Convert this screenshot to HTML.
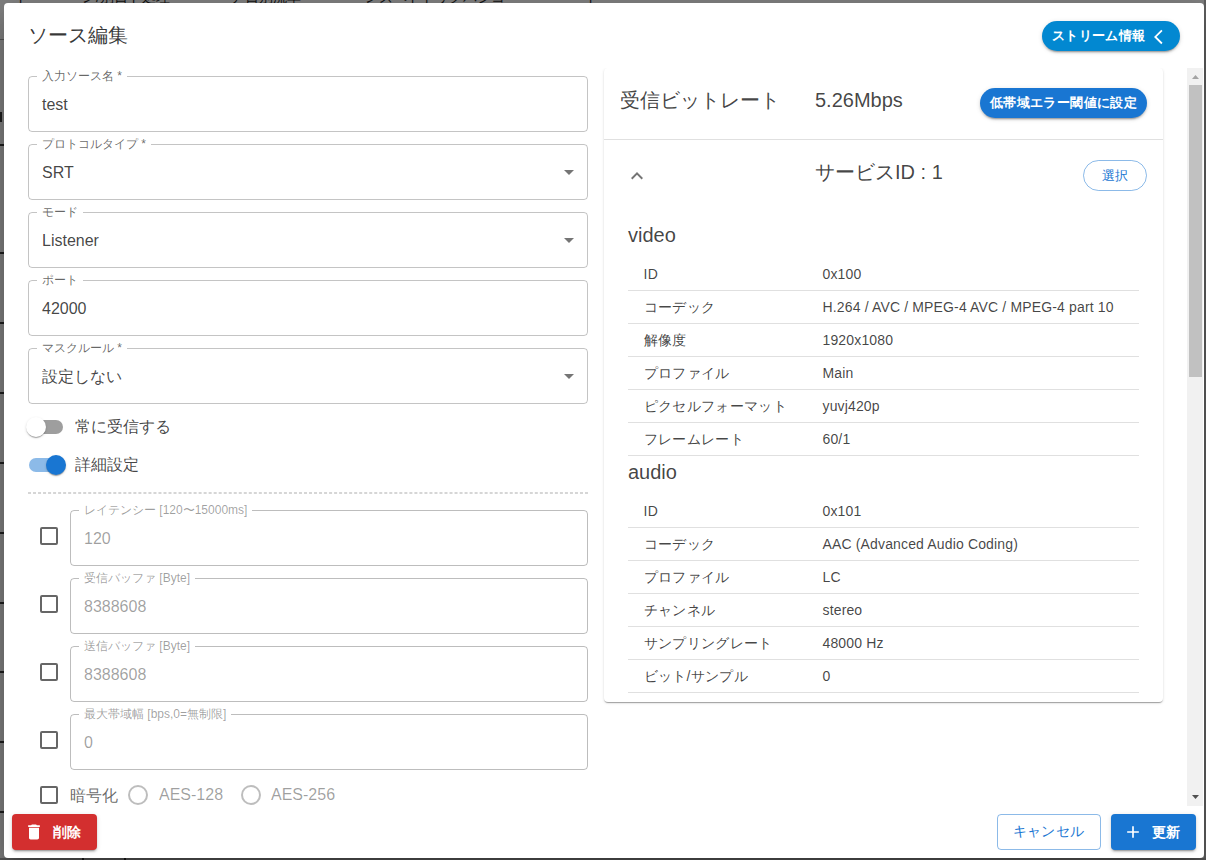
<!DOCTYPE html>
<html><head><meta charset="utf-8">
<style>
*{box-sizing:border-box;margin:0;padding:0}
html,body{width:1206px;height:860px;overflow:hidden}
body{background:#808080;font-family:"Liberation Sans",sans-serif;color:rgba(0,0,0,0.74);position:relative}
.abs{position:absolute}
.dlg{position:absolute;left:4px;top:3px;width:1200px;height:855px;background:#fff;border-radius:4px;overflow:hidden;box-shadow:0 11px 15px -7px rgba(0,0,0,0.2),0 24px 38px 3px rgba(0,0,0,0.14),0 9px 46px 8px rgba(0,0,0,0.12)}
.title{position:absolute;left:24px;top:16px;font-size:20px;line-height:32px;color:rgba(0,0,0,0.78);white-space:nowrap}
.pill{position:absolute;border-radius:16px;color:#fff;font-size:13px;font-weight:bold;white-space:nowrap;letter-spacing:0.02857em;box-shadow:0 3px 1px -2px rgba(0,0,0,0.2),0 2px 2px 0 rgba(0,0,0,0.14),0 1px 5px 0 rgba(0,0,0,0.12)}
.content{position:absolute;left:0;top:65px;width:1200px;height:738px;overflow:hidden}
.fld{position:absolute;left:24px;width:560px;height:56px}
.fld .ol{position:absolute;left:0;top:0;right:0;bottom:0;border:1px solid rgba(0,0,0,0.23);border-radius:4px}
.fld .lb{position:absolute;left:9px;top:-8px;padding:0 5px;background:#fff;font-size:12px;line-height:16px;color:rgba(0,0,0,0.6);white-space:nowrap}
.fld .val{position:absolute;left:14px;top:16.5px;font-size:16px;line-height:23px;white-space:nowrap}
.fld.dis .val{color:rgba(0,0,0,0.38)}
.fld.dis .lb{color:rgba(0,0,0,0.38)}
.fld.dis .ol{border-color:rgba(0,0,0,0.26)}
.arrow{position:absolute;right:7px;top:16px;width:24px;height:24px}
.sw{position:absolute;left:13px;width:58px;height:38px}
.sw .tr{position:absolute;left:12px;top:12px;width:34px;height:14px;border-radius:7px}
.sw .th{position:absolute;top:9px;width:20px;height:20px;border-radius:50%;box-shadow:0 2px 1px -1px rgba(0,0,0,0.2),0 1px 1px 0 rgba(0,0,0,0.14),0 1px 3px 0 rgba(0,0,0,0.12)}
.swl{position:absolute;left:71px;font-size:16px;line-height:24px;white-space:nowrap}
.cb{position:absolute;left:36px;width:18px;height:18px;border:2px solid rgba(0,0,0,0.6);border-radius:2px}
.card{position:absolute;left:600px;top:0;width:559px;height:634px;background:#fff;border-radius:4px;box-shadow:0 2px 1px -1px rgba(0,0,0,0.2),0 1px 1px 0 rgba(0,0,0,0.14),0 1px 3px 0 rgba(0,0,0,0.12)}
.tb{position:absolute;left:24px;width:511px}
.row{position:relative;height:33px;border-bottom:1px solid rgba(224,224,224,1);font-size:14px;line-height:20px}
.row .k{position:absolute;left:15.5px;top:6px;white-space:nowrap;letter-spacing:0.35px}
.row .v{position:absolute;left:194.5px;top:6px;white-space:nowrap;letter-spacing:0.15px}
.h6{position:absolute;left:24px;font-size:20px;line-height:32px;white-space:nowrap}
.sb{position:absolute;left:1183px;top:0;width:16px;height:738px;background:#f1f1f1}
.btn{position:absolute;top:811px;height:36px;border-radius:4px;font-size:14px;white-space:nowrap;letter-spacing:0.02857em}
</style></head><body>
<div class="abs" style="left:1204px;top:0;width:2px;height:860px;background:#616161"></div>
<div class="abs" style="left:0;top:858px;width:1206px;height:2px;background:#5a5a5a"></div>
<div class="abs" style="left:82px;top:857px;width:2px;height:3px;background:#1a1a1a"></div>
<div class="abs" style="left:124px;top:857px;width:2px;height:3px;background:#1a1a1a"></div>
<div class="abs" style="left:0;top:144px;width:4px;height:2px;background:#1e1e1e"></div>
<div class="abs" style="left:0;top:252px;width:4px;height:2px;background:#1e1e1e"></div>
<div class="abs" style="left:0;top:322px;width:4px;height:2px;background:#1e1e1e"></div>
<div class="abs" style="left:0;top:392px;width:4px;height:2px;background:#1e1e1e"></div>
<div class="abs" style="left:0;top:462px;width:4px;height:2px;background:#1e1e1e"></div>
<div class="abs" style="left:0;top:532px;width:4px;height:2px;background:#1e1e1e"></div>
<div class="abs" style="left:0;top:602px;width:4px;height:2px;background:#1e1e1e"></div>
<div class="abs" style="left:0;top:671px;width:4px;height:2px;background:#1e1e1e"></div>
<div class="abs" style="left:0;top:741px;width:4px;height:2px;background:#1e1e1e"></div>
<div class="abs" style="left:0;top:811px;width:4px;height:2px;background:#1e1e1e"></div>
<div class="abs" style="left:0;top:112px;width:2px;height:10px;background:#1e1e1e"></div>
<div class="abs" style="left:0;top:39px;width:4px;height:1px;background:#555"></div>
<div class="abs" style="left:0;top:-11px;width:620px;height:14px;font-size:14px;line-height:16px;color:#111;white-space:nowrap">
<span class="abs" style="left:1px">ード</span><span class="abs" style="left:82px">ン/別日ド処理</span><span class="abs" style="left:231px">ア日別流率</span><span class="abs" style="left:365px">ンズベドトリクパジコー</span><span class="abs" style="left:585px">ド</span></div>
<div class="dlg">
  <div class="title">ソース編集</div>
  <div class="pill" style="left:1038px;top:18px;width:138px;height:30px;background:#0288d1;">
    <span class="abs" style="left:10px;top:6px;line-height:18px">ストリーム情報</span>
    <svg class="abs" style="left:110px;top:7px" width="14" height="18" viewBox="0 0 14 18"><path fill="none" stroke="#fff" stroke-width="1.8" d="M9.9 2.3 3.3 8.9 9.9 15.5"/></svg>
  </div>

  <div class="content">
    <!-- left column fields -->
    <div class="fld" style="top:8px"><div class="ol"></div><div class="lb">入力ソース名 *</div><div class="val">test</div></div>
    <div class="fld" style="top:76px"><div class="ol"></div><div class="lb">プロトコルタイプ *</div><div class="val">SRT</div>
      <svg class="arrow" viewBox="0 0 24 24"><path fill="rgba(0,0,0,0.54)" d="M7 10l5 5 5-5z"/></svg></div>
    <div class="fld" style="top:144px"><div class="ol"></div><div class="lb">モード</div><div class="val">Listener</div>
      <svg class="arrow" viewBox="0 0 24 24"><path fill="rgba(0,0,0,0.54)" d="M7 10l5 5 5-5z"/></svg></div>
    <div class="fld" style="top:212px"><div class="ol"></div><div class="lb">ポート</div><div class="val">42000</div></div>
    <div class="fld" style="top:280px"><div class="ol"></div><div class="lb">マスクルール *</div><div class="val">設定しない</div>
      <svg class="arrow" viewBox="0 0 24 24"><path fill="rgba(0,0,0,0.54)" d="M7 10l5 5 5-5z"/></svg></div>

    <div class="sw" style="top:340px"><div class="tr" style="background:#000;opacity:0.38"></div><div class="th" style="left:9px;background:#fff"></div></div>
    <div class="swl" style="top:347px">常に受信する</div>
    <div class="sw" style="top:378px"><div class="tr" style="background:#1976d2;opacity:0.5"></div><div class="th" style="left:29px;background:#1976d2"></div></div>
    <div class="swl" style="top:385px">詳細設定</div>

    <svg class="abs" style="left:24px;top:424px" width="560" height="2"><line x1="0" y1="1" x2="560" y2="1" stroke="#d6d6d6" stroke-width="2" stroke-dasharray="3 2.018"/></svg>

    <div class="cb" style="top:459px"></div>
    <div class="fld dis" style="left:66px;width:518px;top:442px"><div class="ol"></div><div class="lb">レイテンシー [120〜15000ms]</div><div class="val">120</div></div>
    <div class="cb" style="top:527px"></div>
    <div class="fld dis" style="left:66px;width:518px;top:510px"><div class="ol"></div><div class="lb">受信バッファ [Byte]</div><div class="val">8388608</div></div>
    <div class="cb" style="top:595px"></div>
    <div class="fld dis" style="left:66px;width:518px;top:578px"><div class="ol"></div><div class="lb">送信バッファ [Byte]</div><div class="val">8388608</div></div>
    <div class="cb" style="top:663px"></div>
    <div class="fld dis" style="left:66px;width:518px;top:646px"><div class="ol"></div><div class="lb">最大帯域幅 [bps,0=無制限]</div><div class="val">0</div></div>

    <div class="cb" style="top:718px"></div>
    <div class="abs" style="left:66px;top:715.5px;font-size:16px;line-height:24px;color:rgba(0,0,0,0.6)">暗号化</div>
    <div class="abs" style="left:124px;top:717px;width:20px;height:20px;border:2px solid rgba(0,0,0,0.26);border-radius:50%"></div>
    <div class="abs" style="left:155px;top:715px;font-size:16px;line-height:24px;color:rgba(0,0,0,0.38)">AES-128</div>
    <div class="abs" style="left:237px;top:717px;width:20px;height:20px;border:2px solid rgba(0,0,0,0.26);border-radius:50%"></div>
    <div class="abs" style="left:267px;top:715px;font-size:16px;line-height:24px;color:rgba(0,0,0,0.38)">AES-256</div>

    <!-- right card -->
    <div class="card">
      <div class="abs" style="left:16px;top:18px;font-size:20px;line-height:28px">受信ビットレート</div>
      <div class="abs" style="left:211px;top:18px;font-size:20px;line-height:28px">5.26Mbps</div>
      <div class="pill" style="left:376px;top:20px;width:167px;height:30px;background:#1976d2;">
        <span class="abs" style="left:10px;top:6px;line-height:18px">低帯域エラー閾値に設定</span>
      </div>
      <div class="abs" style="left:0;top:71px;width:559px;height:1px;background:rgba(0,0,0,0.12)"></div>

      <svg class="abs" style="left:21px;top:96px" width="24" height="24" viewBox="0 0 24 24"><path fill="rgba(0,0,0,0.54)" d="M12 8l-6 6 1.41 1.41L12 10.83l4.59 4.58L18 14z"/></svg>
      <div class="abs" style="left:211px;top:90px;font-size:20px;line-height:28px">サービスID : 1</div>
      <div class="abs" style="left:479px;top:92px;width:64px;height:31px;border:1px solid rgba(25,118,210,0.5);border-radius:16px;color:#1976d2;font-size:13px;line-height:18px">
        <span class="abs" style="left:18px;top:6px;letter-spacing:0.02857em">選択</span>
      </div>

      <div class="h6" style="top:151px">video</div>
      <div class="tb" style="top:190px">
        <div class="row"><span class="k">ID</span><span class="v">0x100</span></div>
        <div class="row"><span class="k">コーデック</span><span class="v">H.264 / AVC / MPEG-4 AVC / MPEG-4 part 10</span></div>
        <div class="row"><span class="k">解像度</span><span class="v">1920x1080</span></div>
        <div class="row"><span class="k">プロファイル</span><span class="v">Main</span></div>
        <div class="row"><span class="k">ピクセルフォーマット</span><span class="v">yuvj420p</span></div>
        <div class="row"><span class="k">フレームレート</span><span class="v">60/1</span></div>
      </div>
      <div class="h6" style="top:388px">audio</div>
      <div class="tb" style="top:427px">
        <div class="row"><span class="k">ID</span><span class="v">0x101</span></div>
        <div class="row"><span class="k">コーデック</span><span class="v">AAC (Advanced Audio Coding)</span></div>
        <div class="row"><span class="k">プロファイル</span><span class="v">LC</span></div>
        <div class="row"><span class="k">チャンネル</span><span class="v">stereo</span></div>
        <div class="row"><span class="k">サンプリングレート</span><span class="v">48000 Hz</span></div>
        <div class="row"><span class="k">ビット/サンプル</span><span class="v">0</span></div>
      </div>
    </div>

    <!-- scrollbar -->
    <div class="sb">
      <div class="abs" style="left:2px;top:17px;width:13px;height:292px;background:#c1c1c1"></div>
      <svg class="abs" style="left:5px;top:7px" width="7" height="4" viewBox="0 0 7 4"><path fill="#a3a3a3" d="M0 4 3.5 0 7 4z"/></svg>
      <svg class="abs" style="left:5px;top:727px" width="7" height="4" viewBox="0 0 7 4"><path fill="#505050" d="M0 0 3.5 4 7 0z"/></svg>
    </div>
  </div>

  <!-- actions -->
  <div class="btn" style="left:8px;width:85px;background:#d32f2f;color:#fff;font-weight:bold;box-shadow:0 3px 1px -2px rgba(0,0,0,0.2),0 2px 2px 0 rgba(0,0,0,0.14),0 1px 5px 0 rgba(0,0,0,0.12)">
    <svg class="abs" style="left:12px;top:8px" width="20" height="20" viewBox="0 0 24 24"><path fill="#fff" d="M6 19c0 1.1.9 2 2 2h8c1.1 0 2-.9 2-2V7H6v12zM19 4h-3.5l-1-1h-5l-1 1H5v2h14V4z"/></svg>
    <span class="abs" style="left:41px;top:9px;line-height:18px">削除</span>
  </div>
  <div class="btn" style="left:993px;width:104px;border:1px solid rgba(25,118,210,0.5);color:#1976d2">
    <span class="abs" style="left:14.5px;top:7px;line-height:18px">キャンセル</span>
  </div>
  <div class="btn" style="left:1107px;width:85px;background:#1976d2;color:#fff;font-weight:bold;box-shadow:0 3px 1px -2px rgba(0,0,0,0.2),0 2px 2px 0 rgba(0,0,0,0.14),0 1px 5px 0 rgba(0,0,0,0.12)">
    <svg class="abs" style="left:12px;top:8px" width="20" height="20" viewBox="0 0 24 24"><path fill="#fff" d="M19 13h-6v6h-2v-6H5v-2h6V5h2v6h6v2z"/></svg>
    <span class="abs" style="left:40.5px;top:9px;line-height:18px">更新</span>
  </div>
</div>
</body></html>
